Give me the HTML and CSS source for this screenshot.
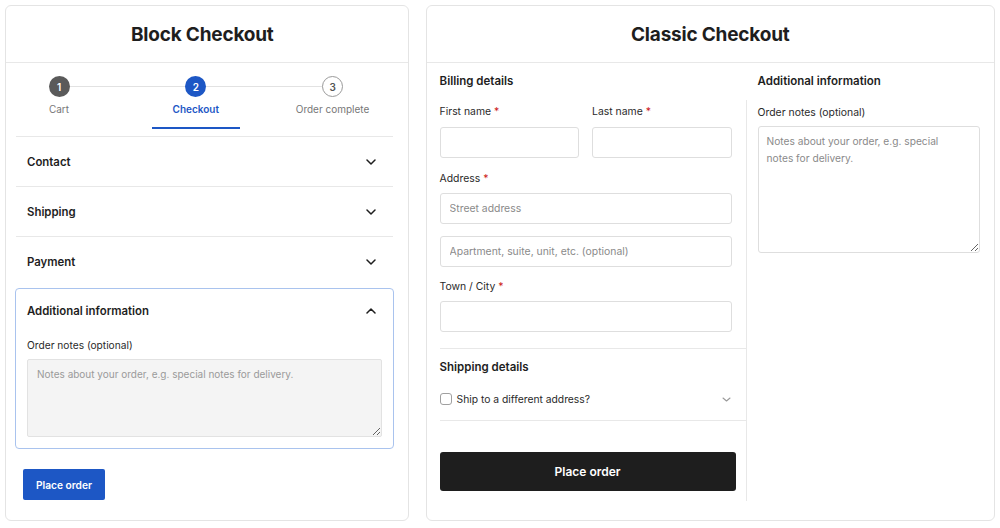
FILE: index.html
```html
<!DOCTYPE html>
<html lang="en">
<head>
<meta charset="utf-8">
<title>Checkout comparison</title>
<link rel="stylesheet" href="styles.css">
</head>
<body>
<div class="page">
  <section class="card card-left">
    <header class="card-head card-head-left">Block Checkout</header>
    <div class="steps">
      <div class="step step-done">
        <span class="circle">1</span>
        <span class="step-label">Cart</span>
        <span class="step-bar"></span>
      </div>
      <div class="step step-active">
        <span class="circle">2</span>
        <span class="step-label">Checkout</span>
        <span class="step-bar"></span>
      </div>
      <div class="step step-todo">
        <span class="circle">3</span>
        <span class="step-label">Order complete</span>
        <span class="step-bar"></span>
      </div>
    </div>
    <div class="acc">
      <div class="acc-row">
        <span>Contact</span>
        <svg class="chev" width="10" height="6" viewBox="0 0 10 6"><path d="M1 1 L5 5 L9 1" /></svg>
      </div>
      <div class="acc-row">
        <span>Shipping</span>
        <svg class="chev" width="10" height="6" viewBox="0 0 10 6"><path d="M1 1 L5 5 L9 1" /></svg>
      </div>
      <div class="acc-row acc-row-last">
        <span>Payment</span>
        <svg class="chev" width="10" height="6" viewBox="0 0 10 6"><path d="M1 1 L5 5 L9 1" /></svg>
      </div>
      <div class="acc-box">
        <div class="acc-box-head">
          <span>Additional information</span>
          <svg class="chev" width="10" height="6" viewBox="0 0 10 6"><path d="M1 5 L5 1 L9 5" /></svg>
        </div>
        <div class="box-label">Order notes (optional)</div>
        <textarea class="notes-block" placeholder="Notes about your order, e.g. special notes for delivery."></textarea>
      </div>
    </div>
    <button class="btn-blue" type="button">Place order</button>
  </section>

  <section class="card card-right">
    <header class="card-head">Classic Checkout</header>
    <div class="classic-body">
      <div class="col-main">
        <div class="sec-title">Billing details</div>
        <div class="name-row">
          <div class="field">
            <label class="lbl lbl-first">First name <span class="req">*</span></label>
            <input class="inp" type="text">
          </div>
          <div class="field">
            <label class="lbl lbl-first">Last name <span class="req">*</span></label>
            <input class="inp" type="text">
          </div>
        </div>
        <div class="field field-address">
          <label class="lbl">Address <span class="req">*</span></label>
          <input class="inp" type="text" placeholder="Street address">
          <input class="inp inp-apt" type="text" placeholder="Apartment, suite, unit, etc. (optional)">
        </div>
        <div class="field field-town">
          <label class="lbl">Town / City <span class="req">*</span></label>
          <input class="inp" type="text">
        </div>
        <div class="rule"></div>
        <div class="sec-title">Shipping details</div>
        <div class="ship-row">
          <span class="ship-left"><span class="check"></span>Ship to a different address?</span>
          <svg class="chev-light" width="9" height="5" viewBox="0 0 9 5"><path d="M1 1 L4.5 4 L8 1" /></svg>
        </div>
        <div class="rule rule-2"></div>
        <button class="btn-dark" type="button">Place order</button>
      </div>
      <div class="col-side">
        <div class="sec-title side-title">Additional information</div>
        <div class="side-body">
          <div class="lbl side-lbl">Order notes (optional)</div>
          <textarea class="notes-classic" placeholder="Notes about your order, e.g. special notes for delivery."></textarea>
        </div>
      </div>
    </div>
  </section>
</div>
</body>
</html>
```

FILE: styles.css
```css
* { box-sizing: border-box; }

body {
  margin: 0;
  padding: 5px;
  background: #ffffff;
  color: #1e1e1e;
  font-family: Inter, "Noto Sans", "Liberation Sans", sans-serif;
}

.page {
  display: flex;
  gap: 17px;
}

.card {
  height: 516px;
  border: 1px solid #e4e4e4;
  border-radius: 6px;
  display: flex;
  flex-direction: column;
  background: #fff;
}

.card-left { width: 404px; }
.card-right { width: 570px; }

.card-head {
  height: 57px;
  flex: none;
  border-bottom: 1px solid #e8e8e8;
  display: flex;
  align-items: center;
  justify-content: center;
  font-size: 19px;
  font-weight: 700;
  letter-spacing: -0.2px;
  color: #1e1e1e;
}

.card-head-left { padding-right: 9px; }

/* Stepper */
.steps {
  position: relative;
  display: flex;
  justify-content: space-between;
  margin: 13px 31px 0 9px;
}

.steps::before {
  content: "";
  position: absolute;
  left: 44px;
  right: 44px;
  top: 10px;
  height: 1px;
  background: #e2e2e2;
}

.step {
  width: 88px;
  display: flex;
  flex-direction: column;
  align-items: center;
}

.circle {
  position: relative;
  z-index: 1;
  width: 21px;
  height: 21px;
  border-radius: 50%;
  display: flex;
  align-items: center;
  justify-content: center;
  font-size: 10px;
  font-weight: 600;
}

.step-done .circle { background: #5a5a5a; color: #fff; }
.step-active .circle { background: #1d57c5; color: #fff; }
.step-todo .circle { background: #fff; color: #555; border: 1px solid #9a9a9a; }

.step-label {
  margin-top: 5px;
  font-size: 10px;
  line-height: 14px;
  color: #777;
  white-space: nowrap;
}

.step-active .step-label { color: #1d57c5; font-weight: 600; }

.step-bar {
  margin-top: 11px;
  width: 100%;
  height: 2px;
}

.step-active .step-bar { background: #1d57c5; }

/* Accordion */
.acc {
  margin: 7px 15px 0 10px;
  border-top: 1px solid #e8e8e8;
}

.acc-row {
  height: 50px;
  border-bottom: 1px solid #e8e8e8;
  display: flex;
  align-items: center;
  justify-content: space-between;
  padding: 0 17px 0 11px;
  font-size: 11.4px;
  font-weight: 600;
}

.acc-row-last { border-bottom: none; }

.chev path {
  fill: none;
  stroke: #1e1e1e;
  stroke-width: 1.5;
  stroke-linecap: round;
  stroke-linejoin: round;
}

.acc-box {
  margin: 1px -1px 0;
  border: 1px solid #a9c3ee;
  border-radius: 4px;
  padding: 0 11px 11px;
}

.acc-box-head {
  height: 44px;
  display: flex;
  align-items: center;
  justify-content: space-between;
  padding-right: 6px;
  font-size: 11.4px;
  font-weight: 600;
}

.box-label {
  margin-top: 5px;
  font-size: 10.2px;
  line-height: 14px;
  color: #2a2a2a;
}

.notes-block {
  display: block;
  margin-top: 7px;
  width: 100%;
  height: 78px;
  resize: vertical;
  background: #f4f4f4;
  border: 1px solid #e2e2e2;
  border-radius: 2px;
  padding: 8px 9px;
  font-family: inherit;
  font-size: 10px;
  line-height: 13px;
  outline: none;
}

.notes-block::placeholder { color: #9a9a9a; }

.btn-blue {
  margin: 20px 0 0 17px;
  width: 82px;
  height: 31px;
  border: none;
  border-radius: 2px;
  background: #1d57c5;
  color: #fff;
  font-family: inherit;
  font-size: 10.2px;
  font-weight: 600;
  align-self: flex-start;
}

/* Classic */
.classic-body {
  display: flex;
  flex: 1;
  padding: 0 14px 19px 13px;
}

.col-main { width: 306px; flex: none; }

.col-side {
  flex: 1;
  display: flex;
  flex-direction: column;
}

.sec-title {
  margin-top: 10px;
  font-size: 11.5px;
  line-height: 16px;
  font-weight: 600;
}

.name-row {
  display: flex;
  gap: 13px;
  width: 292px;
  margin-top: 16px;
}

.name-row .field { flex: 1; }

.field { display: flex; flex-direction: column; width: 292px; }
.name-row .field { width: auto; }

.lbl {
  font-size: 10.4px;
  line-height: 14px;
  color: #2a2a2a;
  margin-bottom: 7px;
}

.lbl-first { margin-bottom: 8px; }

.req { color: #cc1818; }

.inp {
  display: block;
  width: 100%;
  height: 31px;
  border: 1px solid #dedede;
  border-radius: 3px;
  padding: 0 9px;
  font-family: inherit;
  font-size: 10.4px;
  background: #fff;
  outline: none;
}

.inp::placeholder { color: #8a8a8a; }

.inp-apt { margin-top: 12px; }

.field-address { margin-top: 14px; }
.field-town { margin-top: 13px; }

.rule {
  margin-top: 16px;
  border-top: 1px solid #e8e8e8;
}

.rule-2 { margin-top: 14px; }

.ship-row {
  margin-top: 17px;
  width: 292px;
  display: flex;
  align-items: center;
  justify-content: space-between;
  padding-right: 1px;
  font-size: 10.3px;
  line-height: 14px;
  color: #2a2a2a;
}

.ship-left { display: flex; align-items: center; }

.check {
  width: 12px;
  height: 12px;
  border: 1px solid #a0a0a0;
  border-radius: 3px;
  margin-right: 5px;
  background: #fff;
}

.chev-light path {
  fill: none;
  stroke: #9a9a9a;
  stroke-width: 1.1;
  stroke-linecap: round;
  stroke-linejoin: round;
}

.btn-dark {
  display: block;
  margin-top: 31px;
  width: 296px;
  height: 39px;
  border: none;
  border-radius: 3px;
  background: #1e1e1e;
  color: #fff;
  font-family: inherit;
  font-size: 12px;
  font-weight: 600;
}

.side-title { padding-left: 12px; }

.side-body {
  flex: 1;
  margin-top: 11px;
  border-left: 1px solid #e8e8e8;
  padding-left: 11px;
}

.side-lbl { margin: 6px 0 0; }

.notes-classic {
  display: block;
  margin-top: 6px;
  width: 222px;
  height: 127px;
  resize: vertical;
  border: 1px solid #dedede;
  border-radius: 3px;
  padding: 6px 34px 6px 8px;
  font-family: inherit;
  font-size: 10.2px;
  line-height: 17px;
  background: #fff;
  outline: none;
}

.notes-classic::placeholder { color: #8a8a8a; }
```
